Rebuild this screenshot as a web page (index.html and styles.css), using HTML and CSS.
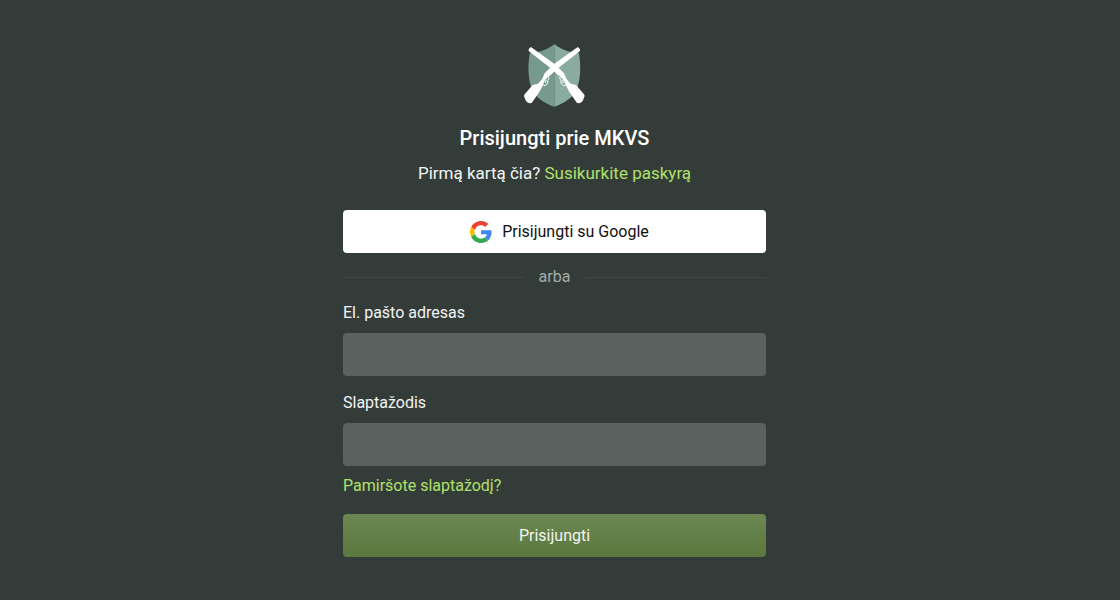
FILE: index.html
```html
<!DOCTYPE html>
<html lang="lt">
<head>
    <meta charset="UTF-8">
    <meta name="viewport" content="width=device-width, initial-scale=1.0">
    <title>Prisijungti prie MKVS</title>
    <link rel="stylesheet" href="styles.css">
</head>
<body>
    <main class="login">
        <!-- Logo -->
        <svg class="logo" viewBox="30 24 183 189" aria-hidden="true">
            <path fill="#779a8e" d="M121 24C105 38 80 49 47 52C41 92 42 128 53 158C64 184 92 202 121 212Z"/>
            <path fill="#8aaba0" d="M121 24C137 38 162 49 195 52C201 92 200 128 189 158C178 184 150 202 121 212Z"/>
            <g id="rifle" fill="#fff">
                <path d="M198 40L192 33L186 37L112 90L104 100L92 112L84 130L72 143L56 147L32 175Q29 179 31 183L35 193Q38 201 46 202L53 201L76 168L87 147L91 136L101 124L111 116L130 98L198 45Z"/>
                <path fill="none" stroke="#fff" stroke-width="3" d="M103 122L105 127L101 133L101 141L94 149L87 147M96 132L94 141"/>
            </g>
            <use href="#rifle" transform="translate(242 0) scale(-1 1)"/>
        </svg>

        <h1 class="title">Prisijungti prie MKVS</h1>
        <p class="subtitle">Pirmą kartą čia? <a href="#">Susikurkite paskyrą</a></p>

        <button type="button" class="btn btn-google">
            <svg class="google-icon" viewBox="0 0 48 48" aria-hidden="true">
                <path fill="#EA4335" d="M24 9.5c3.54 0 6.71 1.22 9.21 3.6l6.85-6.85C35.9 2.38 30.47 0 24 0 14.62 0 6.51 5.38 2.56 13.22l7.98 6.19C12.43 13.72 17.74 9.5 24 9.5z"/>
                <path fill="#4285F4" d="M46.98 24.55c0-1.57-.15-3.09-.38-4.55H24v9.02h12.94c-.58 2.96-2.26 5.48-4.78 7.18l7.73 6c4.51-4.18 7.09-10.36 7.09-17.65z"/>
                <path fill="#FBBC05" d="M10.53 28.59c-.48-1.45-.76-2.99-.76-4.59s.27-3.14.76-4.59l-7.98-6.19C.92 16.46 0 20.12 0 24c0 3.88.92 7.54 2.56 10.78l7.97-6.19z"/>
                <path fill="#34A853" d="M24 48c6.48 0 11.93-2.13 15.89-5.81l-7.73-6c-2.15 1.45-4.92 2.3-8.16 2.3-6.26 0-11.57-4.22-13.47-9.91l-7.98 6.19C6.51 42.62 14.62 48 24 48z"/>
            </svg>
            Prisijungti su Google
        </button>

        <div class="divider">arba</div>

        <!-- Login form -->
        <form class="login-form">
            <div class="field">
                <label for="email">El. pašto adresas</label>
                <input type="email" id="email" name="email">
            </div>
            <div class="field">
                <label for="password">Slaptažodis</label>
                <input type="password" id="password" name="password">
            </div>
            <a class="forgot" href="#">Pamiršote slaptažodį?</a>
            <button type="submit" class="btn btn-primary">Prisijungti</button>
        </form>
    </main>
</body>
</html>
```

FILE: styles.css
```css
* {
    margin: 0;
    padding: 0;
    box-sizing: border-box;
}
body {
    min-height: 100vh;
    padding: 44px 11px 44px 0;
    background: #343c39;
    color: #f2f4f3;
    font-family: Roboto, sans-serif;
    font-size: 16px;
    line-height: 24px;
}
a {
    color: #b0e069;
    text-decoration: none;
}
a:hover {
    text-decoration: underline;
}
.login {
    display: flex;
    flex-direction: column;
    width: 100%;
    max-width: 423px;
    margin: 0 auto;
}
.logo {
    width: 61px;
    height: 63px;
    margin: 0 auto 16px;
}
/* Headings */
.title {
    margin-bottom: 8px;
    color: #fff;
    font-size: 20px;
    font-weight: 500;
    line-height: 30px;
    text-align: center;
}
.subtitle {
    margin-bottom: 25px;
    font-size: 17px;
    text-align: center;
}
/* Buttons */
.btn {
    display: flex;
    align-items: center;
    justify-content: center;
    gap: 10px;
    width: 100%;
    height: 43px;
    border: 0;
    border-radius: 4px;
    font: inherit;
    cursor: pointer;
}
.btn-google {
    padding-left: 10px;
    background: #fff;
    color: #111;
}
.google-icon {
    width: 22px;
    height: 22px;
}
.btn-primary {
    margin-top: 16px;
    background: linear-gradient(#6c8752, #5b783e);
    color: #f2f4f3;
}
/* Line - arba - line */
.divider {
    display: flex;
    align-items: center;
    gap: 15px;
    margin: 12px 0;
    color: #a3aba8;
}
.divider::before,
.divider::after {
    content: "";
    flex: 1;
    height: 1px;
    background: #3f4744;
}
/* Form */
.login-form {
    display: flex;
    flex-direction: column;
}
.field {
    display: flex;
    flex-direction: column;
    gap: 8px;
}
.field + .field {
    margin-top: 15px;
}
.field input {
    width: 100%;
    height: 43px;
    padding: 0 12px;
    border: 0;
    border-radius: 4px;
    background: #5a625f;
    color: #fff;
    font: inherit;
}
.forgot {
    align-self: flex-start;
    margin-top: 8px;
}
```
